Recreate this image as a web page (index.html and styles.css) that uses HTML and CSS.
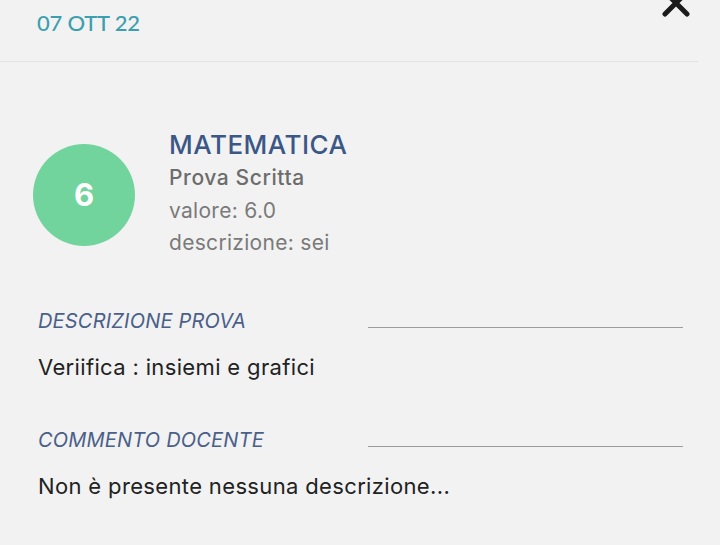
FILE: index.html
```html
<!DOCTYPE html>
<html lang="it">
<head>
    <meta charset="UTF-8">
    <meta name="viewport" content="width=device-width, initial-scale=1.0">
    <title>Dettaglio voto</title>
    <link rel="stylesheet" href="styles.css">
</head>
<body>
    <div class="panel">
        <div class="header">
            <span class="date">07 OTT 22</span>
            <button class="close-button" aria-label="Chiudi">
                <svg width="32" height="24" viewBox="0 0 32 24">
                    <path d="M5 -8 L27 14 M27 -8 L5 14" stroke="#1c1c1c" stroke-width="5" stroke-linecap="round" fill="none"/>
                </svg>
            </button>
        </div>

        <div class="summary">
            <div class="grade">6</div>
            <div class="summary-text">
                <div class="subject">MATEMATICA</div>
                <div class="type">Prova Scritta</div>
                <div class="info">valore: 6.0</div>
                <div class="info">descrizione: sei</div>
            </div>
        </div>

        <div class="section">
            <div class="section-title">
                <span>DESCRIZIONE PROVA</span>
                <div class="rule"></div>
            </div>
            <div class="section-body">Veriifica : insiemi e grafici</div>
        </div>

        <div class="section">
            <div class="section-title">
                <span>COMMENTO DOCENTE</span>
                <div class="rule"></div>
            </div>
            <div class="section-body">Non è presente nessuna descrizione...</div>
        </div>
    </div>
</body>
</html>
```

FILE: styles.css
```css
body {
    margin: 0;
    font-family: Inter, "Open Sans", sans-serif;
    background-color: #f2f2f2;
    color: #222222;
    height: 545px;
    overflow: hidden;
}

.panel {
    width: 698px;
}

.header {
    display: flex;
    justify-content: space-between;
    align-items: flex-start;
    height: 61px;
    padding-left: 37px;
    border-bottom: 1px solid #e2e2e2;
}

.date {
    margin-top: 9px;
    font-family: Lato, sans-serif;
    font-size: 22px;
    font-weight: 500;
    color: #3c9fb0;
    letter-spacing: -0.2px;
}

.close-button {
    margin: 0 6px 0 0;
    padding: 0;
    border: none;
    background: none;
    cursor: pointer;
    line-height: 0;
}

.summary {
    display: flex;
    align-items: center;
    gap: 34px;
    margin-top: 68px;
    padding-left: 33px;
}

.grade {
    width: 102px;
    height: 102px;
    border-radius: 50%;
    background: #72d49d;
    color: #ffffff;
    font-size: 31px;
    font-weight: 700;
    display: flex;
    align-items: center;
    justify-content: center;
}

.summary-text {
    display: flex;
    flex-direction: column;
}

.subject {
    font-size: 26px;
    font-weight: 500;
    color: #3b5787;
    line-height: 30px;
    letter-spacing: 0.5px;
}

.type {
    font-size: 21px;
    font-weight: 500;
    color: #6c6c6c;
    line-height: 35px;
    letter-spacing: 0.6px;
}

.info {
    font-size: 21px;
    color: #7a7a7a;
    line-height: 32px;
    letter-spacing: 0.3px;
}

.section {
    padding-left: 38px;
}

.section-title {
    display: flex;
    align-items: center;
    margin-top: 48px;
    font-size: 20px;
    font-style: italic;
    color: #4a6089;
    letter-spacing: 0.2px;
}

.section:nth-of-type(3) .section-title {
    margin-top: 50px;
}

.section-title span {
    width: 330px;
}

.rule {
    width: 315px;
    height: 1px;
    margin-top: 12px;
    background: #9c9c9c;
}

.section-body {
    margin-top: 21px;
    font-size: 22px;
    color: #222222;
    letter-spacing: 0.35px;
}
```
